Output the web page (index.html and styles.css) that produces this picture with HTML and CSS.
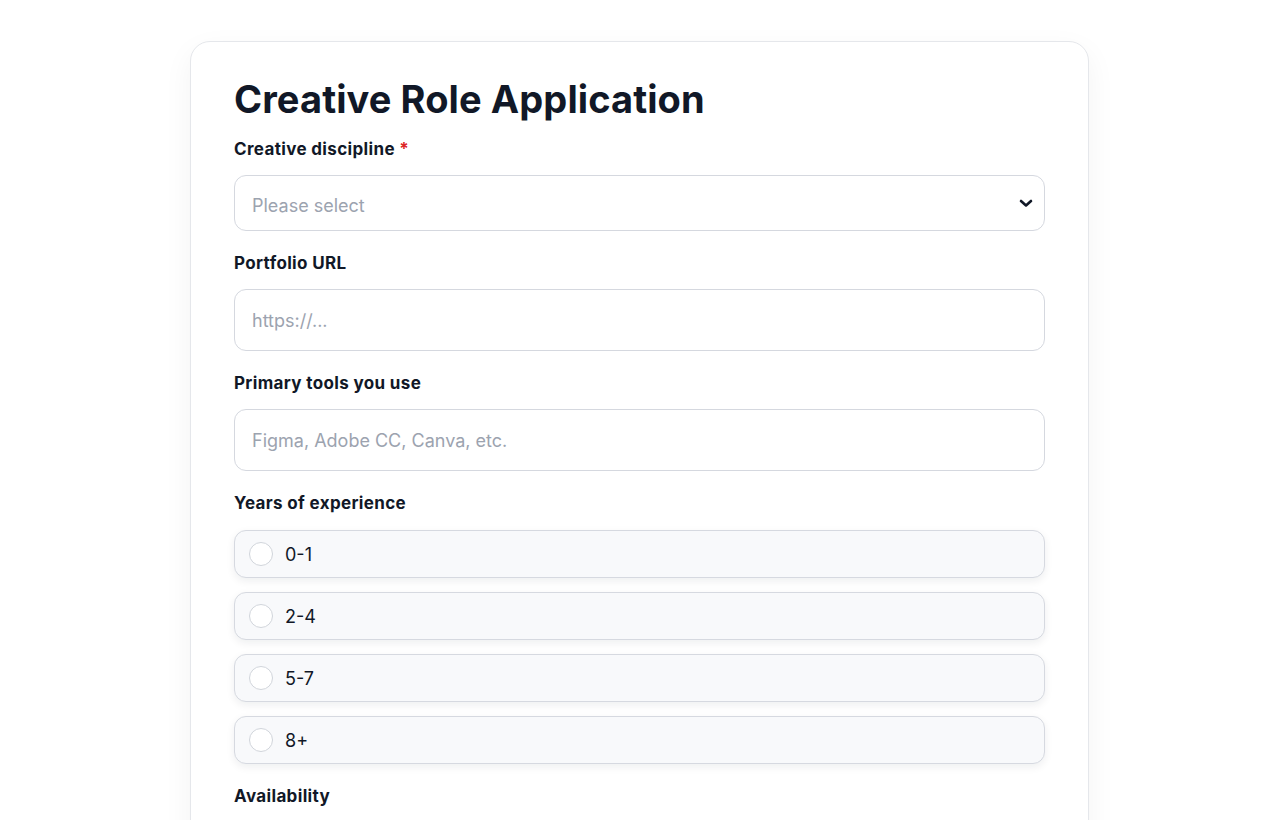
FILE: index.html
```html
<!DOCTYPE html>
<html lang="en">
<head>
<meta charset="utf-8">
<title>Creative Role Application</title>
<link rel="stylesheet" href="styles.css">
</head>
<body>
<main class="card">
  <h1 class="title">Creative Role Application</h1>
  <div class="field">
    <label class="label">Creative discipline <span class="req">*</span></label>
    <div class="select">
      <span class="placeholder">Please select</span>
      <svg class="chev" width="16" height="16" viewBox="0 0 16 16"><path d="M3 6 L8 10.5 L13 6" fill="none" stroke="#111827" stroke-width="2.6" stroke-linecap="round" stroke-linejoin="round"/></svg>
    </div>
  </div>
  <div class="field">
    <label class="label">Portfolio URL</label>
    <div class="input"><span class="placeholder">https://...</span></div>
  </div>
  <div class="field">
    <label class="label">Primary tools you use</label>
    <div class="input"><span class="placeholder">Figma, Adobe CC, Canva, etc.</span></div>
  </div>
  <div class="field">
    <label class="label">Years of experience</label>
    <div class="options">
      <div class="option"><span class="radio"></span><span class="opt-text">0-1</span></div>
      <div class="option"><span class="radio"></span><span class="opt-text">2-4</span></div>
      <div class="option"><span class="radio"></span><span class="opt-text">5-7</span></div>
      <div class="option"><span class="radio"></span><span class="opt-text">8+</span></div>
    </div>
  </div>
  <div class="field">
    <label class="label">Availability</label>
  </div>
</main>
</body>
</html>
```
FILE: styles.css
```css
* { box-sizing: border-box; }
html, body { margin: 0; padding: 0; background: #ffffff; }
body {
  font-family: "Inter", "DejaVu Sans", sans-serif;
  color: #111827;
  padding-top: 41px;
}
.card {
  width: 899px;
  margin: 0 auto 0 190px;
  background: #fff;
  border: 1px solid #e5e7eb;
  border-radius: 20px;
  box-shadow: 0 10px 30px rgba(17, 24, 39, 0.05);
  padding: 30px 43px 40px;
  min-height: 900px;
}
.title {
  margin: 0 0 12px;
  font-size: 38px;
  font-weight: 700;
  letter-spacing: 0.1px;
  line-height: 54px;
  color: #111827;
}
.field { margin-bottom: 21px; }
.label {
  display: block;
  font-size: 17px;
  font-weight: 700;
  line-height: 22px;
  margin-bottom: 15px;
  letter-spacing: 0.35px;
}
.req { color: #dc2626; }
.select, .input {
  display: flex;
  align-items: center;
  justify-content: space-between;
  border: 1px solid #d5d8df;
  border-radius: 12px;
  background: #fff;
  padding: 0 18px 0 17px;
}
.select { height: 56px; padding-top: 4px; }
.input { height: 62px; }
.placeholder {
  font-size: 18px;
  color: #9ca3af;
  letter-spacing: 0;
}
.chev { margin-right: -8px; margin-top: -4px; }
.options { display: flex; flex-direction: column; gap: 14px; padding-top: 1px; }
.option {
  display: flex;
  align-items: center;
  height: 48px;
  background: #f8f9fb;
  border: 1px solid #d6d9e0;
  border-radius: 12px;
  box-shadow: 0 3px 8px rgba(17, 24, 39, 0.07);
  padding-left: 14px;
}
.radio {
  width: 24px;
  height: 24px;
  border-radius: 50%;
  border: 1px solid #d1d5db;
  background: #fff;
  margin-right: 12px;
}
.opt-text { font-size: 18px; color: #111827; }
```
